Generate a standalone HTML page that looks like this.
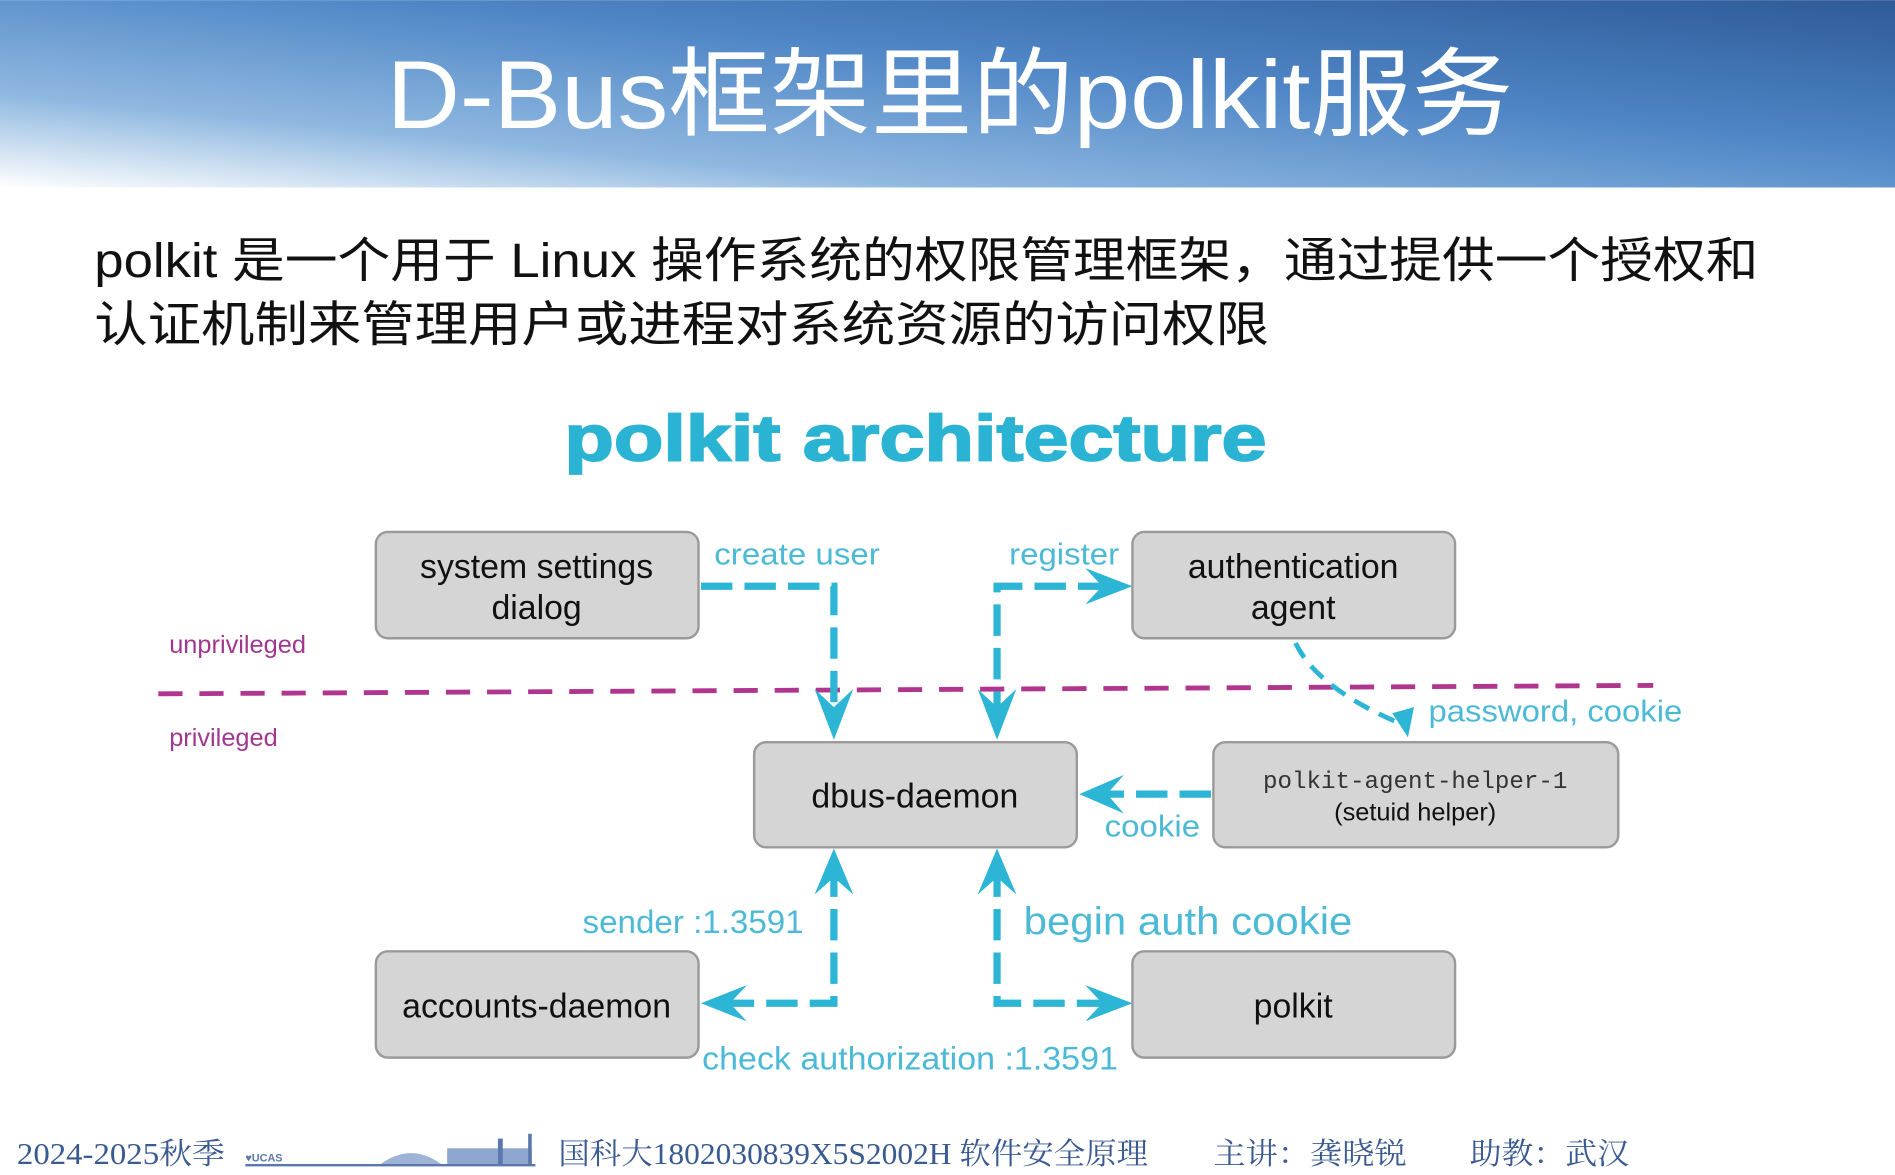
<!DOCTYPE html>
<html><head><meta charset="utf-8"><style>
html,body{margin:0;padding:0;background:#fff;}
svg{display:block}
</style></head><body>
<svg width="1895" height="1175" viewBox="0 0 1568 972" xmlns="http://www.w3.org/2000/svg">
<defs>
<linearGradient id="hg" x1="0" y1="1" x2="1" y2="0">
<stop offset="0" stop-color="#ffffff"/>
<stop offset="0.25" stop-color="#8fb8e0"/>
<stop offset="0.6" stop-color="#4f86c6"/>
<stop offset="1" stop-color="#2f5a98"/>
</linearGradient>
</defs>
<rect x="0" y="0" width="1568" height="155" fill="url(#hg)"/>
<text x="320" y="106" textLength="932" lengthAdjust="spacingAndGlyphs" fill="#fff" font-size="80" font-family="Liberation Sans, Noto Sans CJK SC, sans-serif">D-Bus框架里的polkit服务</text>
<g font-family="Liberation Sans, Noto Sans CJK SC, sans-serif" font-size="40" fill="#111">
<text x="78" y="229" textLength="1377" lengthAdjust="spacingAndGlyphs">polkit 是一个用于 Linux 操作系统的权限管理框架，通过提供一个授权和</text>
<text x="78" y="282" textLength="972" lengthAdjust="spacingAndGlyphs">认证机制来管理用户或进程对系统资源的访问权限</text>
</g>
<text x="467" y="381" textLength="581" lengthAdjust="spacingAndGlyphs" fill="#2ab3d2" font-size="54" font-weight="bold" stroke="#2ab3d2" stroke-width="1.5" font-family="Liberation Sans, sans-serif">polkit architecture</text>

<g fill="#d5d5d5" stroke="#9a9a9a" stroke-width="2">
<rect x="311" y="440" width="267" height="88" rx="10"/>
<rect x="937" y="440" width="267" height="88" rx="10"/>
<rect x="624" y="614" width="267" height="87" rx="10"/>
<rect x="1004" y="614" width="335" height="87" rx="10"/>
<rect x="311" y="787" width="267" height="88" rx="10"/>
<rect x="937" y="787" width="267" height="88" rx="10"/>
</g>
<g font-family="Liberation Sans, sans-serif" font-size="28" fill="#111" text-anchor="middle">
<text x="444" y="478">system settings</text>
<text x="444" y="512">dialog</text>
<text x="1070" y="478">authentication</text>
<text x="1070" y="512">agent</text>
<text x="757" y="668">dbus-daemon</text>
<text x="444" y="842">accounts-daemon</text>
<text x="1070" y="842">polkit</text>
<text x="1171" y="652" font-family="Liberation Mono, monospace" font-size="20" fill="#333">polkit-agent-helper-1</text>
<text x="1171" y="679" font-size="21" fill="#111">(setuid helper)</text>
</g>

<line x1="131" y1="574" x2="1368" y2="567" stroke="#b0358f" stroke-width="4" stroke-dasharray="20 14"/>
<g font-family="Liberation Sans, sans-serif" font-size="21" fill="#a2378f">
<text x="140" y="540">unprivileged</text>
<text x="140" y="617">privileged</text>
</g>

<g stroke="#2cb5d5" stroke-width="6" fill="none" stroke-dasharray="26 10">
<polyline points="580,485 690,485 690,600"/>
<polyline points="825,598 825,485 925,485"/>
<polyline points="690,716 690,830 592,830"/>
<polyline points="825,716 825,830 925,830"/>
<line x1="1002" y1="657" x2="906" y2="657"/>
<path d="M1072,532 Q1090,570 1162,600" stroke-width="4" stroke-dasharray="14 9"/>
</g>
<g fill="#2cb5d5">
<path d="M674,570 L690,612 L706,570 L690,585 Z"/>
<path d="M809,570 L825,612 L841,570 L825,585 Z"/>
<path d="M674,740 L690,702 L706,740 L690,726 Z"/>
<path d="M809,740 L825,702 L841,740 L825,726 Z"/>
<path d="M898,470 L937,485 L898,500 L912,485 Z"/>
<path d="M898,815 L937,830 L898,845 L912,830 Z"/>
<path d="M618,815 L580,830 L618,845 L604,830 Z"/>
<path d="M930,641 L893,657 L930,673 L916,657 Z"/>
<path d="M1152,590 L1165,610 L1170,585 Z"/>
</g>
<g font-family="Liberation Sans, sans-serif" fill="#4cbad6">
<text x="591" y="467" font-size="25" textLength="137" lengthAdjust="spacingAndGlyphs">create user</text>
<text x="835" y="467" font-size="25" textLength="91" lengthAdjust="spacingAndGlyphs">register</text>
<text x="1182" y="597" font-size="25" textLength="210" lengthAdjust="spacingAndGlyphs">password, cookie</text>
<text x="914" y="692" font-size="25" textLength="79" lengthAdjust="spacingAndGlyphs">cookie</text>
<text x="482" y="772" font-size="27" textLength="183" lengthAdjust="spacingAndGlyphs">sender :1.3591</text>
<text x="847" y="773" font-size="32" textLength="272" lengthAdjust="spacingAndGlyphs">begin auth cookie</text>
<text x="581" y="885" font-size="27" textLength="344" lengthAdjust="spacingAndGlyphs">check authorization :1.3591</text>
</g>

<g font-family="Liberation Serif, Noto Serif CJK SC, serif" font-size="25" fill="#3a5a92">
<text x="14" y="963" textLength="172" lengthAdjust="spacingAndGlyphs">2024-2025秋季</text>
<text x="462" y="963" textLength="488" lengthAdjust="spacingAndGlyphs">国科大1802030839X5S2002H  软件安全原理</text>
<text x="1004" y="963" textLength="160" lengthAdjust="spacingAndGlyphs">主讲：龚晓锐</text>
<text x="1216" y="963" textLength="132" lengthAdjust="spacingAndGlyphs">助教：武汉</text>
</g>
<g fill="#5a78ad">
<rect x="203" y="963" width="240" height="2"/>
<text x="203" y="961" font-size="9" font-family="Liberation Sans, sans-serif" font-weight="bold">♥UCAS</text>
<path d="M315,963 Q340,945 365,963 Z" fill="#9fb3d6"/>
<rect x="370" y="950" width="70" height="13" fill="#8ea6d0"/>
<rect x="412" y="942" width="4" height="21"/>
<rect x="437" y="938" width="3" height="25"/>
</g>
</svg>
</body></html>
